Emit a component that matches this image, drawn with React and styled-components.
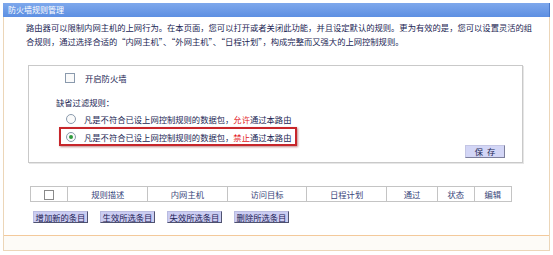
import React from 'react'
import styled, {createGlobalStyle} from 'styled-components'

const GlobalStyle = createGlobalStyle`
  body {
    margin: 0;
    background: #fff;
    font-family: "Noto Sans CJK SC", "DejaVu Sans", sans-serif;
  }
`

const FONT = 8.3

const Frame = styled.div`
  width: 547px;
  margin: 3px 0 0 3px;
`

const TitleBar = styled.div`
  height: 14px;
  line-height: 14px;
  padding-left: 5px;
  font-size: 8px;
  color: #fff;
  background: linear-gradient(to bottom, #7ea8ec, #5d8fe2);
  border-right: 1px solid #4a78c8;
`

const Body = styled.div`
  border-left: 1px solid #ecd6b8;
  border-right: 1px solid #ecd6b8;
  border-bottom: 1px solid #ecd6b8;
`

const Main = styled.div`
  padding: 3px 0 0 0;
  border-bottom: 1px solid #f3c99b;
  height: 219px;
  box-sizing: border-box;
`

const Intro = styled.p`
  margin: 0 0 0 22px;
  width: 510px;
  font-size: ${FONT}px;
  line-height: 14px;
  color: #1b2654;
  font-feature-settings: "fwid";
`

const SettingsBox = styled.div`
  margin: 17px 0 0 24px;
  width: 495px;
  height: 98px;
  border: 1px solid #c9c9c9;
  box-shadow: 1px 1px 0 #e6e6e6;
  padding: 3px 0 0 0;
  box-sizing: border-box;
`

const Row = styled.label`
  display: flex;
  align-items: center;
  height: ${p => p.h || 17}px;
  padding-left: ${p => p.indent}px;
  font-size: ${FONT}px;
  color: #1b2654;
  gap: ${p => p.gap || 9}px;
`

const Check = styled.span`
  width: 8px;
  height: 8px;
  border: 1px solid #8a9aad;
  background: #fafafa;
`

const Radio = styled.span`
  width: 8px;
  height: 8px;
  border: 1px solid #8a9aad;
  border-radius: 50%;
  background: #fafafa;
  display: flex;
  align-items: center;
  justify-content: center;
  &::after {
    content: '';
    width: 4px;
    height: 4px;
    border-radius: 50%;
    background: ${p => (p.checked ? '#2e9a3c' : 'transparent')};
  }
`

const Caption = styled.div`
  margin: 9px 0 0 27px;
  height: 15px;
  line-height: 15px;
  font-size: ${FONT}px;
  color: #1b2654;
`

const Highlight = styled.div`
  margin-left: 30px;
  width: 238px;
  border: 2px solid #c7262b;
  box-shadow: 1px 1px 2px rgba(120, 0, 0, 0.45);
  box-sizing: border-box;
`

const Red = styled.span`
  color: #e3171b;
`

const SaveWrap = styled.div`
  display: flex;
  justify-content: flex-end;
  padding-right: 17px;
  margin-top: -1px;
`

const SaveButton = styled.button`
  width: 40px;
  height: 13px;
  padding: 0;
  font-family: inherit;
  font-size: ${FONT}px;
  line-height: 11px;
  color: #1b2654;
  letter-spacing: 4px;
  text-indent: 4px;
  background: #d3d6f6;
  border: 1px solid #7c7f9c;
  border-left-color: #c4c6e4;
  border-top-color: #c4c6e4;
`

const RuleTable = styled.table`
  margin: 23px 0 0 26px;
  width: 482px;
  border-collapse: collapse;
  font-size: ${FONT}px;
  color: #38457a;
  td {
    height: 14px;
    padding: 0;
    border: 1px solid #c4c4c4;
    text-align: center;
    line-height: 13px;
  }
`

const TableCheck = styled.span`
  display: inline-block;
  vertical-align: middle;
  width: 8px;
  height: 8px;
  border: 1px solid #8a8a8a;
`

const Actions = styled.div`
  display: flex;
  gap: 12px;
  margin: 9px 0 0 29px;
`

const ActionButton = styled.button`
  width: 55px;
  height: 12px;
  padding: 0;
  font-family: inherit;
  font-size: ${FONT}px;
  line-height: 10px;
  color: #1b2054;
  background: #cbcdf2;
  border: 1px solid #4f5270;
  border-left-color: #b9bbe0;
  border-top-color: #b9bbe0;
  white-space: nowrap;
`

const Footer = styled.div`
  height: 14px;
  background: #fdfbf7;
`

const columns = [
  {w: 37, label: <TableCheck />},
  {w: 80, label: '规则描述'},
  {w: 80, label: '内网主机'},
  {w: 80, label: '访问目标'},
  {w: 80, label: '日程计划'},
  {w: 51, label: '通过'},
  {w: 36, label: '状态'},
  {w: 37, label: '编辑'}
]

const actions = ['增加新的条目', '生效所选条目', '失效所选条目', '删除所选条目']

const App = () => {
  return (
    <>
      <GlobalStyle />
      <Frame lang="zh-CN">
        <TitleBar>防火墙规则管理</TitleBar>
        <Body>
          <Main>
            <Intro>
              路由器可以限制内网主机的上网行为。在本页面，您可以打开或者关闭此功能，并且设定默认的规则。更为有效的是，您可以设置灵活的组合规则，通过选择合适的“内网主机”、“外网主机”、“日程计划”，构成完整而又强大的上网控制规则。
            </Intro>

            <SettingsBox>
              <Row indent={36} gap={10}>
                <Check />
                <span>开启防火墙</span>
              </Row>
              <Caption>缺省过滤规则：</Caption>
              <Row indent={37} gap={8}>
                <Radio />
                <span>
                  凡是不符合已设上网控制规则的数据包，<Red>允许</Red>通过本路由
                </span>
              </Row>
              <Highlight>
                <Row indent={5} gap={8} h={15}>
                  <Radio checked />
                  <span>
                    凡是不符合已设上网控制规则的数据包，<Red>禁止</Red>通过本路由
                  </span>
                </Row>
              </Highlight>
              <SaveWrap>
                <SaveButton>保存</SaveButton>
              </SaveWrap>
            </SettingsBox>

            <RuleTable>
              <tbody>
                <tr>
                  {columns.map((c, i) => (
                    <td key={i} style={{width: c.w}}>{c.label}</td>
                  ))}
                </tr>
              </tbody>
            </RuleTable>

            <Actions>
              {actions.map(a => (
                <ActionButton key={a}>{a}</ActionButton>
              ))}
            </Actions>
          </Main>
          <Footer />
        </Body>
      </Frame>
    </>
  )
}

export default App
